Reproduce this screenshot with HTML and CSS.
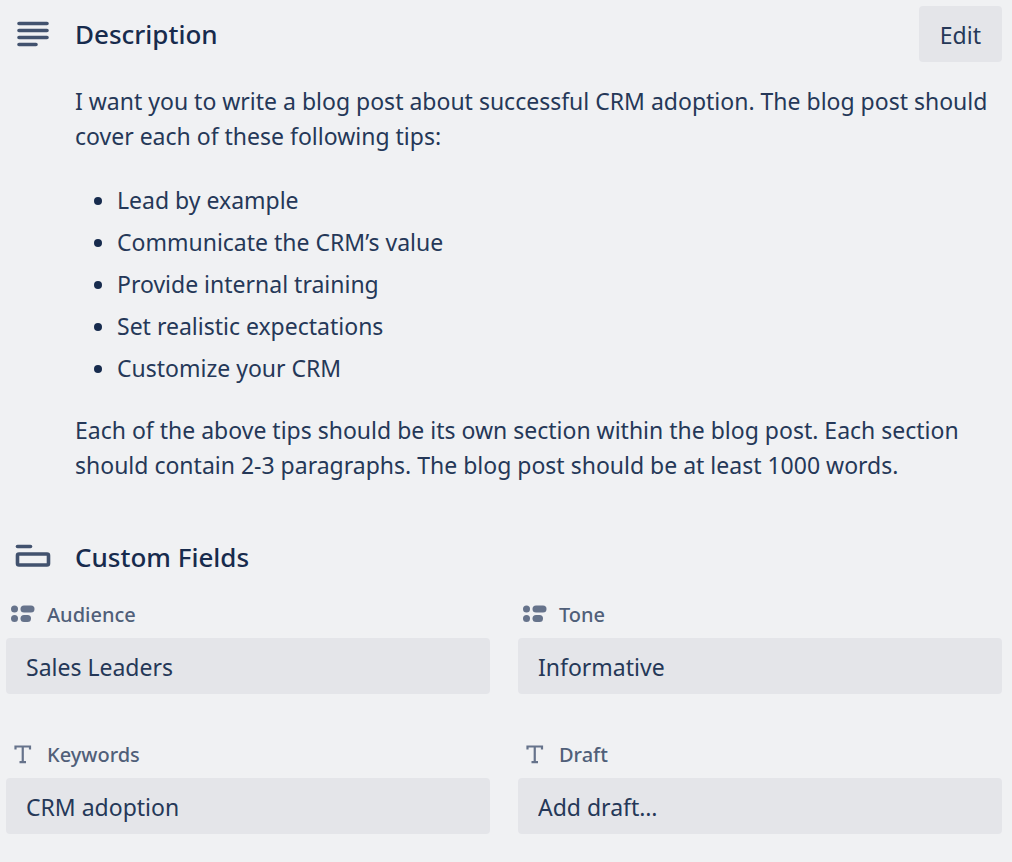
FILE: index.html
```
<!DOCTYPE html>
<html lang="en">
<head>
  <meta charset="UTF-8">
  <meta name="viewport" content="width=device-width, initial-scale=1.0">
  <title>Card details</title>
  <link rel="stylesheet" href="styles.css">
</head>
<body>

  <section class="description">
    <div class="section-header">
      <svg class="section-icon" viewBox="0 0 36 36" aria-hidden="true">
        <path d="M4 7.500h28M4 14.500h28M4 21.500h28M4 28.500h17" fill="none" stroke="currentColor" stroke-width="3.600" stroke-linecap="round"/>
      </svg>
      <h2>Description</h2>
      <button type="button" class="edit">Edit</button>
    </div>
    <div class="text">
      <p>I want you to write a blog post about successful CRM adoption. The blog post should cover each of these following tips:</p>
      <ul>
        <li>Lead by example</li>
        <li>Communicate the CRM’s value</li>
        <li>Provide internal training</li>
        <li>Set realistic expectations</li>
        <li>Customize your CRM</li>
      </ul>
      <p>Each of the above tips should be its own section within the blog post. Each section should contain 2-3 paragraphs. The blog post should be at least 1000 words.</p>
    </div>
  </section>

  <section class="custom-fields">
    <div class="section-header">
      <svg class="section-icon" viewBox="0 0 36 36" aria-hidden="true">
        <path d="M2.500 7.500h13" fill="none" stroke="currentColor" stroke-width="3.600" stroke-linecap="round"/>
        <rect x="2.500" y="15" width="31" height="11" rx="1.500" fill="none" stroke="currentColor" stroke-width="3.600"/>
      </svg>
      <h2>Custom Fields</h2>
    </div>
    <form class="fields">
      <div class="field">
        <label for="audience">
          <svg class="field-icon" viewBox="0 0 24 24" aria-hidden="true">
            <circle cx="3.500" cy="6" r="3.500"/>
            <rect x="9.500" y="2.500" width="14" height="7" rx="3.500"/>
            <circle cx="3.500" cy="15.500" r="3.500"/>
            <rect x="9.500" y="12" width="10.500" height="7" rx="3.500"/>
          </svg>
          Audience
        </label>
        <select id="audience">
          <option>Sales Leaders</option>
        </select>
      </div>
      <div class="field">
        <label for="tone">
          <svg class="field-icon" viewBox="0 0 24 24" aria-hidden="true">
            <circle cx="3.500" cy="6" r="3.500"/>
            <rect x="9.500" y="2.500" width="14" height="7" rx="3.500"/>
            <circle cx="3.500" cy="15.500" r="3.500"/>
            <rect x="9.500" y="12" width="10.500" height="7" rx="3.500"/>
          </svg>
          Tone
        </label>
        <select id="tone">
          <option>Informative</option>
        </select>
      </div>
      <div class="field">
        <label for="keywords">
          <svg class="field-icon" viewBox="0 0 24 24" aria-hidden="true">
            <path d="M4.500 6.500V3.500h14.500V6.500M11.750 3.500V19M8.500 19.200h6.500" fill="none" stroke="currentColor" stroke-width="2.200"/>
          </svg>
          Keywords
        </label>
        <input type="text" id="keywords" value="CRM adoption">
      </div>
      <div class="field">
        <label for="draft">
          <svg class="field-icon" viewBox="0 0 24 24" aria-hidden="true">
            <path d="M4.500 6.500V3.500h14.500V6.500M11.750 3.500V19M8.500 19.200h6.500" fill="none" stroke="currentColor" stroke-width="2.200"/>
          </svg>
          Draft
        </label>
        <input type="text" id="draft" placeholder="Add draft…">
      </div>
    </form>
  </section>

</body>
</html>
```
FILE: styles.css
```
* {
  box-sizing: border-box;
}

body {
  margin: 0;
  padding: 6px 10px 28px 6px;
  font-family: "Noto Sans", "Open Sans", sans-serif;
  font-size: 23px;
  line-height: 35px;
  color: #253858;
  background-color: #f0f1f3;
}

.section-header {
  display: flex;
  align-items: center;
  height: 56px;
  padding-left: 9px;
}

.section-icon {
  width: 36px;
  height: 36px;
  margin-right: 24px;
  color: #42526e;
}

h2 {
  margin: 0;
  font-size: 26px;
  font-weight: 500;
  color: #172b4d;
}

.edit {
  height: 56px;
  margin-left: auto;
  padding: 2px 21px 0;
  color: #253858;
  background-color: #e4e5e9;
  border: none;
  border-radius: 4px;
  font: inherit;
  cursor: pointer;
}

.text {
  padding: 22px 0 0 69px;
}

p {
  margin: 0;
}

ul {
  margin: 29px 0 27px;
  padding-left: 42px;
}

li + li {
  margin-top: 7px;
}

li::marker {
  color: #172b4d;
}

.custom-fields {
  margin-top: 46px;
}

.fields {
  display: grid;
  grid-template-columns: 1fr 1fr;
  gap: 42px 28px;
  margin-top: 11px;
}

label {
  display: flex;
  align-items: center;
  gap: 12px;
  height: 42px;
  padding: 0 0 5px 5px;
  font-size: 20px;
  font-weight: 500;
  color: #505f79;
}

.field-icon {
  width: 24px;
  height: 24px;
  color: #66738b;
  fill: currentColor;
}

input,
select {
  display: block;
  width: 100%;
  height: 56px;
  padding: 2px 20px 0;
  color: #253858;
  background-color: #e4e5e9;
  border: none;
  border-radius: 4px;
  font: inherit;
  appearance: none;
}

input::placeholder {
  color: #253858;
  opacity: 1;
}

.edit:hover,
input:hover,
select:hover {
  background-color: #dcdee3;
}
```
